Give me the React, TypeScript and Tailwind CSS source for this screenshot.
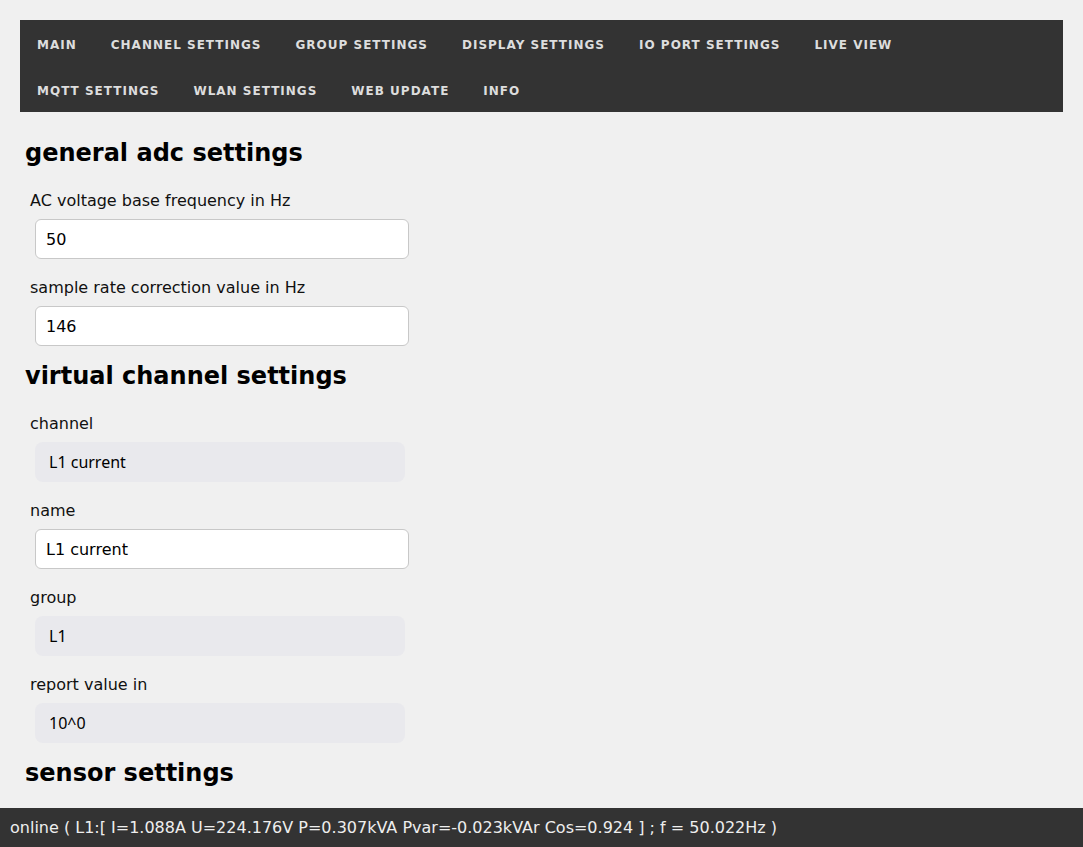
import React from "react";

const navItems = [
  "main",
  "channel settings",
  "group settings",
  "display settings",
  "io port settings",
  "live view",
  "mqtt settings",
  "wlan settings",
  "web update",
  "info",
];

function Heading({ children, className = "" }: { children: React.ReactNode; className?: string }) {
  return (
    <h2 className={`text-[24px] leading-[28px] font-bold text-black ${className}`}>
      {children}
    </h2>
  );
}

function Label({ children, className = "" }: { children: React.ReactNode; className?: string }) {
  return (
    <div className={`ml-[5px] text-[16px] leading-[19px] text-[#111] ${className}`}>
      {children}
    </div>
  );
}

function TextField({ value }: { value: string }) {
  return (
    <input
      type="text"
      defaultValue={value}
      className="block ml-[10px] mt-[9px] w-[374px] h-[40px] px-[10px] text-[16px] text-black bg-white border border-[#c8c8c8] rounded-[6px] outline-none"
    />
  );
}

function SelectField({ value }: { value: string }) {
  return (
    <div className="ml-[10px] mt-[9px] w-[370px] h-[40px] pl-[14px] flex items-center font-['Noto_Sans',sans-serif] text-[16px] text-black bg-[#e9e9ed] rounded-[8px]">
      {value}
    </div>
  );
}

export default function App() {
  return (
    <div
      className="min-h-screen bg-[#f0f0f0] pt-[20px] pb-[60px]"
      style={{ fontFamily: '"DejaVu Sans", "Noto Sans", sans-serif' }}
    >
      {/* navigation */}
      <nav className="mx-[20px] bg-[#333333] flex flex-wrap">
        {navItems.map((item) => (
          <a
            key={item}
            href="#"
            className="h-[46px] px-[17px] pt-[4px] flex items-center text-[12px] font-bold uppercase tracking-[1px] text-[#dddddd]"
          >
            {item}
          </a>
        ))}
      </nav>

      <div className="px-[25px]">
        <Heading className="mt-[27px]">general adc settings</Heading>
        <Label className="mt-[24px]">AC voltage base frequency in Hz</Label>
        <TextField value="50" />
        <Label className="mt-[19px]">sample rate correction value in Hz</Label>
        <TextField value="146" />

        <Heading className="mt-[16px]">virtual channel settings</Heading>
        <Label className="mt-[24px]">channel</Label>
        <SelectField value="L1 current" />
        <Label className="mt-[19px]">name</Label>
        <TextField value="L1 current" />
        <Label className="mt-[19px]">group</Label>
        <SelectField value="L1" />
        <Label className="mt-[19px]">report value in</Label>
        <SelectField value="10^0" />

        <Heading className="mt-[16px]">sensor settings</Heading>
      </div>

      {/* status bar */}
      <div className="fixed bottom-0 left-0 right-0 h-[39px] bg-[#333333] pl-[10px] flex items-center text-[16px] text-[#eeeeee]">
        online ( L1:[ I=1.088A U=224.176V P=0.307kVA Pvar=-0.023kVAr Cos=0.924 ] ; f = 50.022Hz )
      </div>
    </div>
  );
}
